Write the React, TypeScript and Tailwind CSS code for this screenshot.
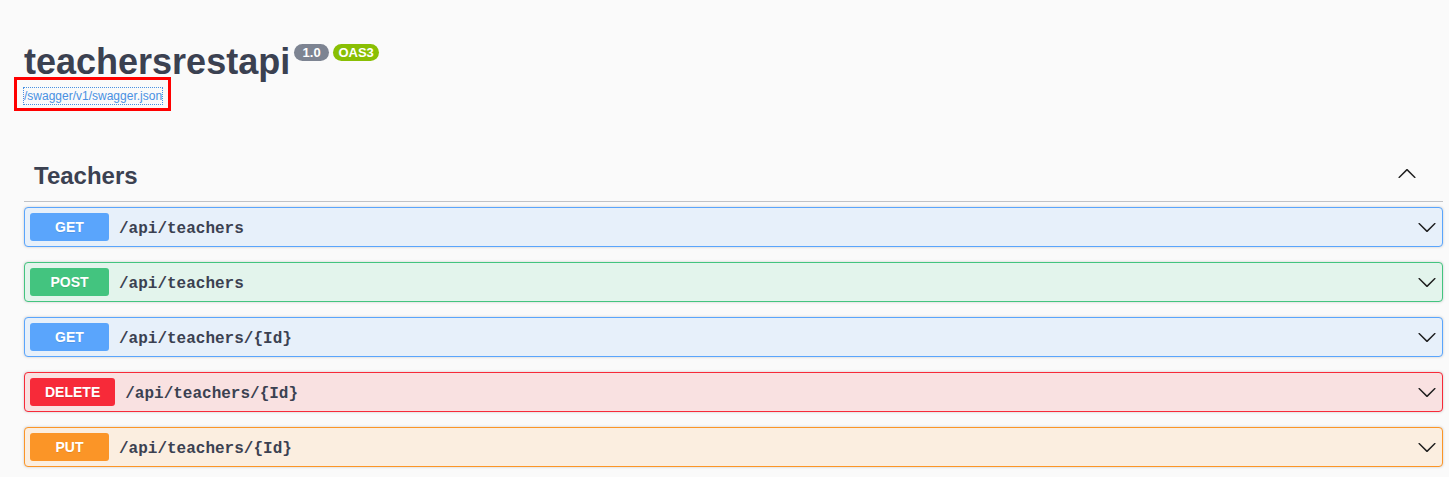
import React from 'react';

type Method = 'GET' | 'POST' | 'DELETE' | 'PUT';

interface Operation {
  method: Method;
  path: string;
}

const operations: Operation[] = [
  { method: 'GET', path: '/api/teachers' },
  { method: 'POST', path: '/api/teachers' },
  { method: 'GET', path: '/api/teachers/{Id}' },
  { method: 'DELETE', path: '/api/teachers/{Id}' },
  { method: 'PUT', path: '/api/teachers/{Id}' },
];

// block background, border and badge colour per method
const methodStyles: Record<Method, { block: string; badge: string }> = {
  GET: { block: 'bg-[#e7f0fa] border-[#5aa5fc]', badge: 'bg-[#5aa5fc]' },
  POST: { block: 'bg-[#e3f4ec] border-[#43c47f]', badge: 'bg-[#43c47f]' },
  DELETE: { block: 'bg-[#f9e1e1] border-[#f72a39]', badge: 'bg-[#f72a39]' },
  PUT: { block: 'bg-[#fbeee0] border-[#fb9527]', badge: 'bg-[#fb9527]' },
};

function Chevron({ up = false }: { up?: boolean }): JSX.Element {
  return (
    <svg
      width="20"
      height="20"
      viewBox="0 0 20 20"
      className={up ? 'rotate-180 shrink-0' : 'shrink-0'}
      fill="#1f1f1f"
    >
      <path d="M17.418 6.109c.272-.268.709-.268.979 0s.271.701 0 .969l-7.908 7.83c-.27.268-.707.268-.979 0l-7.908-7.83c-.27-.268-.27-.701 0-.969.271-.268.709-.268.979 0L10 13.25l7.418-7.141z" />
    </svg>
  );
}

function OpBlock({ op }: { op: Operation }): JSX.Element {
  const s = methodStyles[op.method];
  return (
    <div
      className={`mb-[15px] flex items-center rounded-[4px] border p-[5px] shadow-[0_0_3px_rgba(0,0,0,0.19)] ${s.block}`}
    >
      <span
        className={`min-w-[79px] rounded-[3px] px-[15px] py-[6px] text-center text-[14px] font-bold leading-[16px] text-white [text-shadow:0_1px_0_rgba(0,0,0,0.1)] ${s.badge}`}
      >
        {op.method}
      </span>
      <span className="mt-[3px] flex-1 px-[10px] font-['Liberation_Mono',monospace] text-[16px] font-bold leading-[20px] text-[#3b4151]">
        {op.path}
      </span>
      <Chevron />
    </div>
  );
}

export default function App(): JSX.Element {
  return (
    <div className="min-h-screen bg-[#fafafa] font-['Liberation_Sans',Arial,sans-serif] text-[#3b4151]">
      <div className="relative pl-[24px] pr-[6px] pt-[42px]">
        {/* Info */}
        <div className="flex h-[40px] items-start">
          <h2 className="text-[36px] font-bold leading-[40px]">teachersrestapi</h2>
          <div className="ml-[4px] mt-[2px] flex gap-[4px]">
            <span className="w-[35px] rounded-full bg-[#7d8492] text-center text-[13px] font-bold leading-[17px] text-white">
              1.0
            </span>
            <span className="w-[46px] rounded-full bg-[#89bf04] text-center text-[13px] font-bold leading-[17px] text-white">
              OAS3
            </span>
          </div>
        </div>
        <div className="mt-[1px] h-[18px]">
          <a className="-ml-[1px] inline-block border border-dotted border-[#4990e2] text-[12px] leading-[16px] text-[#4990e2]">
            /swagger/v1/swagger.json
          </a>
        </div>

        {/* annotation box over the spec link */}
        <div className="pointer-events-none absolute left-[14px] top-[77px] h-[34px] w-[157px] border-[3px] border-[#ff0000]" />

        {/* Tag section */}
        <div className="mt-[49px]">
          <div className="mb-[5px] flex items-center border-b border-[rgba(59,65,81,0.3)] py-[10px] pl-[10px] pr-[20px]">
            <h3 className="flex-1 text-[24px] font-bold leading-[31px]">Teachers</h3>
            <div className="mr-[6px] -mt-[3px]">
              <Chevron up />
            </div>
          </div>
          {operations.map((op, i) => (
            <OpBlock key={i} op={op} />
          ))}
        </div>
      </div>
    </div>
  );
}
